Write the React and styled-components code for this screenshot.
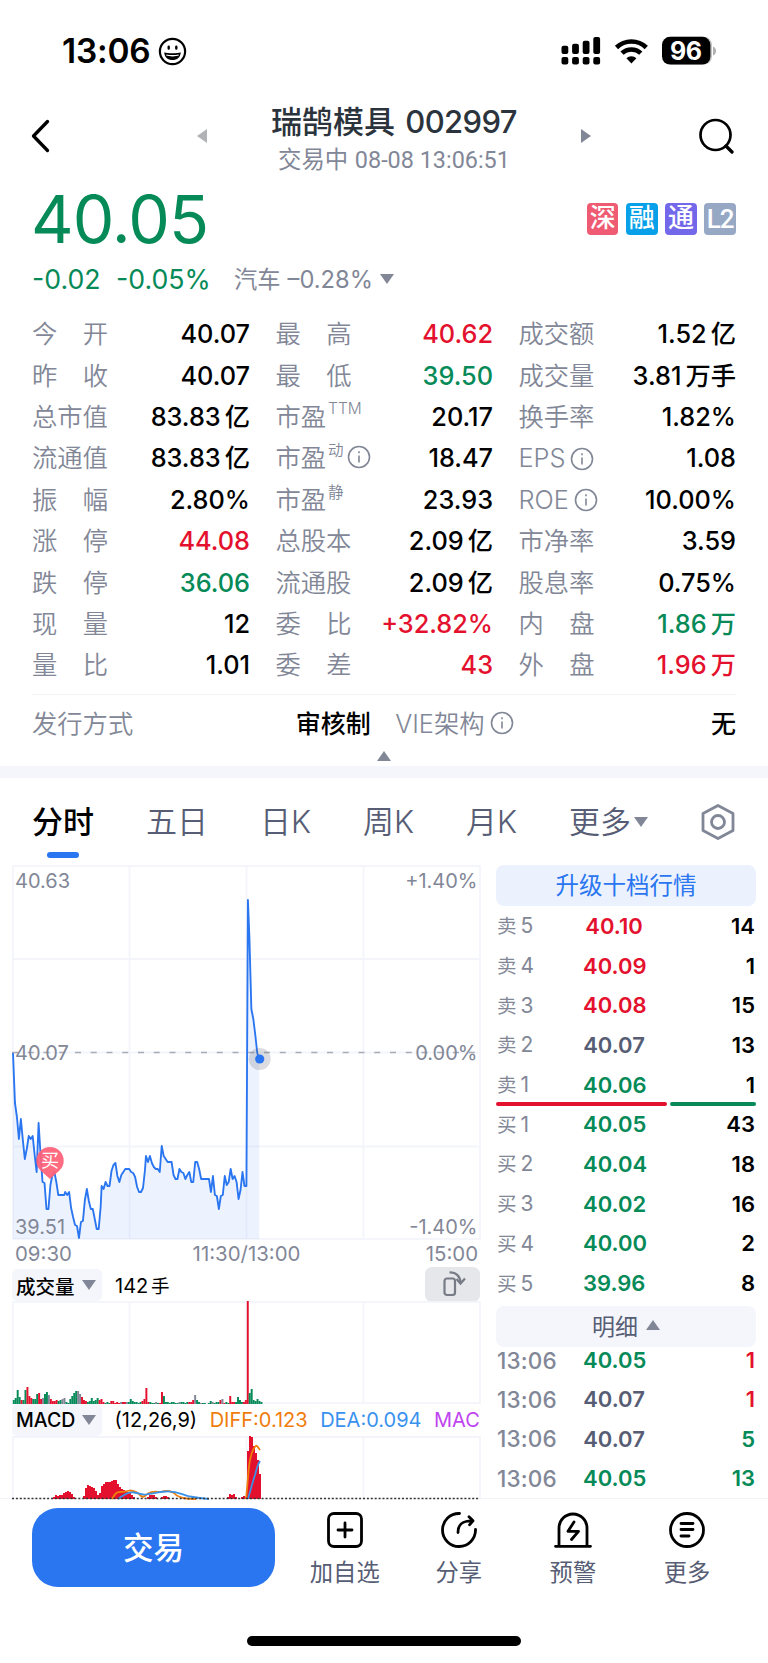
import styled, { createGlobalStyle } from "styled-components";

const RED = "#e4112e";
const GREEN = "#068a58";
const GREY = "#828797";
const SLATE = "#565d74";
const BLUE = "#2a75f0";

const stats = [
	[["今开", "40.07"], ["最高", "40.62", RED], ["成交额", "1.52", null, "亿"]],
	[["昨收", "40.07"], ["最低", "39.50", GREEN], ["成交量", "3.81", null, "万手"]],
	[["总市值", "83.83", null, "亿"], ["市盈", "20.17", null, "", "TTM"], ["换手率", "1.82%"]],
	[["流通值", "83.83", null, "亿"], ["市盈", "18.47", null, "", "动", true], ["EPS", "1.08", null, "", "", true]],
	[["振幅", "2.80%"], ["市盈", "23.93", null, "", "静"], ["ROE", "10.00%", null, "", "", true]],
	[["涨停", "44.08", RED], ["总股本", "2.09", null, "亿"], ["市净率", "3.59"]],
	[["跌停", "36.06", GREEN], ["流通股", "2.09", null, "亿"], ["股息率", "0.75%"]],
	[["现量", "12"], ["委比", "+32.82%", RED], ["内盘", "1.86", GREEN, "万"]],
	[["量比", "1.01"], ["委差", "43", RED], ["外盘", "1.96", RED, "万"]],
];

const asks = [
	["卖", 5, "40.10", RED, 14],
	["卖", 4, "40.09", RED, 1],
	["卖", 3, "40.08", RED, 15],
	["卖", 2, "40.07", SLATE, 13],
	["卖", 1, "40.06", GREEN, 1],
];

const bids = [
	["买", 1, "40.05", GREEN, 43],
	["买", 2, "40.04", GREEN, 18],
	["买", 3, "40.02", GREEN, 16],
	["买", 4, "40.00", GREEN, 2],
	["买", 5, "39.96", GREEN, 8],
];

const ticks = [
	["40.05", GREEN, 1, RED],
	["40.07", SLATE, 1, RED],
	["40.07", SLATE, 5, GREEN],
	["40.05", GREEN, 13, GREEN],
];

const pricePoints =
	"1,188 3,238 5,252 7,274 9,254 11,275 13,294 15,284 17,271 19,274 21,271 23,290 25,307 27,258 29,290 31,317 33,318 35,344 37,344 39,320 41,310 43,307 45,317 47,330 53,330 54,327 56,330 58,327 60,343 62,352 64,360 66,361 68,373 70,357 72,356 74,335 76,324 78,336 80,344 82,344 84,354 86,364 88,364 90,342 91,321 93,324 95,317 97,321 99,321 101,306 103,300 105,298 107,311 109,317 111,310 113,307 115,304 119,304 121,307 123,308 125,312 127,322 129,327 131,327 133,323 135,305 136,291 138,297 140,291 142,298 144,302 146,304 148,304 150,307 152,281 154,291 156,294 158,297 162,297 164,310 166,314 168,314 170,304 172,307 174,308 176,314 178,310 180,307 182,317 184,317 186,297 188,297 190,304 192,314 200,314 202,327 204,311 206,330 208,331 210,344 212,331 214,330 216,311 218,320 220,317 222,304 224,314 226,311 228,317 230,334 232,325 234,307 236,321 238,321 239.5,35 241,72 243,144 245,154 247,170 249,188 251,194";

// colour code and height for every minute of trading
const volumes =
	"g4 g6 g14 g7 r4 g4 g14 r17 r8 r6 g5 g5 g10 r11 r5 x6 g10 g12 x9 r5 r3 r3 r4 g3 g4 x5 x6 g2 g1 g5 g8 g11 g13 x13 x10 r7 r4 r3 g2 g3 g6 g3 g4 g6 r4 r5 r2 g1 g2 g1 r3 r3 r1 r2 r1 x2 r2 r2 x2 g2 g5 g3 g2 g2 g1 g2 r3 r5 r16 r2 g2 g1 g1 x2 g1 r1 r12 g8 g2 g2 g1 g2 g2 g1 g1 x2 g2 g2 g1 g2 r2 r2 r4 x9 g4 g2 x1 g1 g1 g0 g1 g3 x2 g1 g2 g2 r4 x5 r1 g2 g1 r8 r2 r2 g2 g7 g4 g2 r2 r4 r103 g11 g15 g4 g3 g5 g3 g2"
		.split(" ");

const macdBars = [
	[42, 2], [44, 4], [46, 3], [48, 4], [50, 4], [52, 6], [54, 7], [56, 8], [58, 7], [60, 5], [62, 2],
	[72, 3], [74, 11], [76, 14], [78, 13], [80, 12], [82, 11], [84, 8], [86, 4], [88, 6], [90, 13], [92, 15],
	[94, 17], [96, 17], [98, 17], [100, 18], [102, 19], [104, 19], [106, 15], [108, 12], [110, 10], [112, 9],
	[114, 8], [116, 7], [118, 6], [120, 4], [122, 2], [136, 2], [138, 4], [140, 4], [142, 4], [144, 2],
	[150, 2], [152, 3], [154, 3], [156, 2], [216, 2], [218, 5], [220, 4], [222, 5], [224, 2], [230, 2], [232, 3],
	[234, 2], [236, 48], [238, 64], [240, 62], [242, 53], [244, 46], [246, 39], [248, 25],
];

function Info() {
	return (
		<InfoSvg viewBox="0 0 24 24" fill="none" stroke={GREY} strokeWidth="1.6">
			<circle cx="12" cy="12" r="10.5" />
			<path d="M12 10.5v7M12 6.3v2" />
		</InfoSvg>
	);
}

function Stat({ item }) {
	const [label, value, color, unit, sup, info] = item;
	return (
		<StatCell>
			<Label $latin={label === "EPS" || label === "ROE"}>
				{label.length === 2 && !sup ? (
					<Spread>
						<span>{label[0]}</span>
						<span>{label[1]}</span>
					</Spread>
				) : (
					label
				)}
				{sup && <Sup $latin={sup === "TTM"}>{sup}</Sup>}
				{info && <Info />}
			</Label>
			<Value $color={color}>
				{value}
				{unit && <Unit>{unit}</Unit>}
			</Value>
		</StatCell>
	);
}

function StatusIcons() {
	return (
		<svg width="160" height="30" viewBox="560 36 160 30">
			{[0, 1, 2, 3].map((i) => (
				<g key={i}>
					<rect x={561.5 + i * 10.6} y={[45.7, 43.7, 40.7, 37][i]} width="6.8" height={[8.3, 10.3, 13.3, 17][i]} rx="2" />
					<rect x={561.5 + i * 10.6} y="57" width="6.8" height="7.5" rx="2" />
				</g>
			))}
			<g fill="none" stroke="#000" strokeWidth="4.6">
				<path d="M616.500 47.500a21.500 21.500 0 0 1 29.800 0" />
				<path d="M622 53.200a13.700 13.700 0 0 1 18.800 0" />
			</g>
			<path d="M631.400 63.500l-5-5.200a7.400 7.400 0 0 1 10 0z" />
			<rect x="664" y="36.800" width="48" height="27.800" rx="8" fill="#c4c4c4" />
			<rect x="662" y="36.800" width="48.400" height="27.800" rx="8" />
			<path d="M713 46.500c4 1.500 4 7.500 0 9z" fill="#b0b0b0" />
			<text x="685.800" y="59.800" textAnchor="middle" fontFamily="Inter" fontSize="25" fontWeight="700" fill="#fff" letterSpacing="-0.5">
				96
			</text>
		</svg>
	);
}

function PriceChart() {
	return (
		<svg width="470" height="376" viewBox="0 0 470 376">
			<g stroke="#f4f5fb" strokeWidth="1.8" fill="none">
				<rect x="1" y="1" width="467" height="373" />
				<path d="M117.500 0V374M234.500 0V374M351.500 0V374M0 94H468M0 187.500H468M0 281.500H468" />
			</g>
			<polygon points={`1,374 ${pricePoints} 251,374`} transform="scale(0.985 1)" fill={BLUE} fillOpacity="0.085" />
			<path d="M0 187.500H468" stroke="#a9acb8" strokeWidth="1.5" strokeDasharray="6 9.750" />
			<polyline
				points={pricePoints}
				transform="scale(0.985 1)"
				fill="none"
				stroke={BLUE}
				strokeWidth="1.9"
				strokeLinejoin="round"
			/>
			<g fontFamily="Inter" fontSize="20" fill={GREY}>
				<text x="3" y="22.500">40.63</text>
				<text x="3" y="194.500">40.07</text>
				<text x="3" y="368.500">39.51</text>
				<text x="465.500" y="22.500" textAnchor="end">+1.40%</text>
				<text x="465.500" y="194.500" textAnchor="end">0.00%</text>
				<text x="465.500" y="368.500" textAnchor="end">-1.40%</text>
			</g>
			<circle cx="247.700" cy="194" r="11" fill="#5b6270" fillOpacity="0.22" />
			<circle cx="247.700" cy="194" r="4.600" fill={BLUE} />
			<path d="M38 314L28.500 305.500A13.700 13.700 0 1 1 47.500 305.500Z" fill="#ff6076" fillOpacity="0.93" />
			<text x="38" y="302" textAnchor="middle" fontFamily="Noto Sans CJK SC" fontSize="18" fill="#fff">
				买
			</text>
		</svg>
	);
}

function VolumeChart() {
	const fills = { g: GREEN, r: RED, x: GREY };
	return (
		<svg width="470" height="103" viewBox="0 0 470 103">
			<g stroke="#f4f5fb" strokeWidth="1.8" fill="none">
				<rect x="1" y="1" width="467" height="101" />
				<path d="M117.500 0V102M234.500 0V102M351.500 0V102" />
			</g>
			{volumes.map((v, i) => {
				const h = Number(v.slice(1));
				return <rect key={i} x={0.8 + i * 1.95} y={103 - h} width="1.96" height={h} fill={fills[v[0]]} />;
			})}
		</svg>
	);
}

function MacdChart() {
	return (
		<svg width="470" height="64" viewBox="0 0 470 64">
			<g stroke="#f4f5fb" strokeWidth="1.8" fill="none">
				<path d="M1 64V1H468V64M117.500 0V64M234.500 0V64M351.500 0V64" />
			</g>
			{macdBars.map(([x, h]) => (
				<rect key={x} x={x - 1} y={63 - h} width="2" height={h} fill={RED} shapeRendering="crispEdges" />
			))}
			<g fill="none" strokeWidth="1.8">
				<path
					d="M100 63C103 58 104 56 108 56S114 55.500 118 54.500C124 55 126 57 129 60C131 62 133 60 136 57.500C141 54.500 144 56 149 56C153 54.500 158 54.500 162 57C166 62 168 60.500 171 62C176 63 180 63 184 63M234 63C236 46 236 34 238 24C240 14 243 9 245 10L248 14"
					stroke="#ef7d0b"
				/>
				<path
					d="M106 63C112 59 115 56 122 56.500C128 57 130 60 136 58C146 57 148 55.500 154 55.500C166 55 168 58 178 60.500C186 62 190 62.500 197 63M236 63C239 52 242 42 243 39C245 31 246 28 248 25"
					stroke="#3a92e8"
				/>
			</g>
			<path d="M0 62.500H468" stroke="#333" strokeWidth="1.500" strokeDasharray="2 1.900" />
		</svg>
	);
}

function BookLevel({ level }) {
	const [side, n, price, color, lots] = level;
	return (
		<BookRow>
			<Side>
				{side}
				<b>{n}</b>
			</Side>
			<BookPrice $color={color}>{price}</BookPrice>
			<Lots>{lots}</Lots>
		</BookRow>
	);
}

export default function App() {
	return (
		<>
			<GlobalStyle />
			<Screen>
				<StatusBar>
					<Clock>
						13:06
						<svg width="29" height="29" viewBox="0 0 29 29" fill="none" stroke="#000" strokeWidth="2.200">
							<circle cx="14.500" cy="14.500" r="12.600" />
							<path d="M6.300 15.200c2.500 1.300 13.900 1.300 16.400 0c0 5-3.700 7.800-8.200 7.800s-8.200-2.800-8.200-7.800z" fill="#000" stroke="none" />
							<path d="M8.300 18c3 1 9.400 1 12.400 0" stroke="#fff" strokeWidth="1.300" />
							<path d="M10.700 9.800v1.800M18.300 9.800v1.800" strokeLinecap="round" strokeWidth="2.400" />
						</svg>
					</Clock>
					<StatusIcons />
				</StatusBar>

				<Header>
					<svg width="20" height="34" viewBox="0 0 20 34" fill="none" stroke="#000" strokeWidth="3.300">
						<path d="M17.500 2.500L3.500 17L17.500 31.500" strokeLinecap="round" strokeLinejoin="round" />
					</svg>
					<Titles>
						<Arrow $dir="left" />
						<TitleText>
							<Name>
								瑞鹄模具 <b>002997</b>
							</Name>
							<Session>
								交易中 <b>08-08 13:06:51</b>
							</Session>
						</TitleText>
						<Arrow $dir="right" />
					</Titles>
					<svg width="37" height="36" viewBox="0 0 37 36" fill="none" stroke="#000" strokeWidth="2.700">
						<circle cx="17.500" cy="17" r="15" />
						<path d="M28 28l6 6" strokeWidth="3.300" strokeLinecap="round" />
					</svg>
				</Header>

				<PriceRow>
					<Price>40.05</Price>
					<Badges>
						<Badge $color="#ee5b72">深</Badge>
						<Badge $color="#08a0e8">融</Badge>
						<Badge $color="#7468ea">通</Badge>
						<Badge $color="#96a8c4" $latin>
							L2
						</Badge>
					</Badges>
				</PriceRow>
				<ChangeRow>
					<Change $width={84}>-0.02</Change>
					<Change $width={118}>-0.05%</Change>
					<Sector>
						<span>汽车</span>
						<b>–0.28%</b>
						<Triangle />
					</Sector>
				</ChangeRow>

				<Stats>{stats.map((row) => row.map((item) => <Stat key={item[0] + item[1]} item={item} />))}</Stats>

				<Issue>
					<Label>发行方式</Label>
					<Strong $width={237.5}>审核制</Strong>
					<VieLabel>
						VIE架构
						<Info />
					</VieLabel>
					<Strong>无</Strong>
				</Issue>
				<Fold>
					<Triangle $up />
				</Fold>
				<Band />

				<Tabs>
					<Tab $active>
						<span>分时</span>
					</Tab>
					<Tab>
						<span>五日</span>
					</Tab>
					<Tab>
						<span>日K</span>
					</Tab>
					<Tab>
						<span>周K</span>
					</Tab>
					<Tab>
						<span>月K</span>
					</Tab>
					<Tab>
						<span>更多</span>
						<Triangle />
					</Tab>
					<svg width="36" height="38" viewBox="0 0 36 38" fill="none" stroke={GREY} strokeWidth="2.800">
						<path d="M18 2.500L33 10.500V27.500L18 35.500L3 27.500V10.500Z" strokeLinejoin="round" />
						<circle cx="18" cy="19" r="6.500" />
					</svg>
				</Tabs>

				<Main>
					<Charts>
						<PriceChart />
						<Times>
							<span>09:30</span>
							<span>11:30/13:00</span>
							<span>15:00</span>
						</Times>
						<VolumeHead>
							<Picker>
								成交量
								<Triangle />
							</Picker>
							<Legend>
								142 <Hands>手</Hands>
							</Legend>
							<RotateButton>
								<svg width="28" height="28" viewBox="0 0 28 28" fill="none" stroke="#777b85" strokeWidth="2.200">
									<rect x="5.500" y="8.500" width="10.500" height="16.500" rx="2.500" />
									<path d="M10.500 2.500C17 2 21 6 21.500 12.500M17.500 9L21.500 13.500L26 8.500" />
								</svg>
							</RotateButton>
						</VolumeHead>
						<VolumeChart />
						<MacdHead>
							<Picker>
								MACD
								<Triangle />
							</Picker>
							<Legend>(12,26,9)</Legend>
							<Legend $color="#f07c0c">DIFF:0.123</Legend>
							<Legend $color="#3a92ee">DEA:0.094</Legend>
							<Legend $color="#c044f0">MAC</Legend>
						</MacdHead>
						<MacdChart />
					</Charts>

					<Book>
						<Upgrade>升级十档行情</Upgrade>
						{asks.map((level) => (
							<BookLevel key={level[1]} level={level} />
						))}
						<Ratio>
							<RatioPart $grow={170} $color={RED} />
							<RatioPart $grow={86} $color={GREEN} />
						</Ratio>
						{bids.map((level) => (
							<BookLevel key={level[1]} level={level} />
						))}
						<Detail>
							明细
							<Triangle $up />
						</Detail>
						<Ticks>
							{ticks.map(([price, color, lots, lotsColor], i) => (
								<TickRow key={i}>
									<Time>13:06</Time>
									<BookPrice $color={color}>{price}</BookPrice>
									<Lots $color={lotsColor}>{lots}</Lots>
								</TickRow>
							))}
						</Ticks>
					</Book>
				</Main>

				<BottomBar>
					<TradeButton>交易</TradeButton>
					<Action>
						<ActionSvg viewBox="0 0 38 38">
							<rect x="2.500" y="2.500" width="33" height="33" rx="5.500" />
							<path d="M19 12v14M12 19h14" />
						</ActionSvg>
						加自选
					</Action>
					<Action>
						<ActionSvg viewBox="0 0 38 38">
							<path d="M19.500 2.500A16.500 16.500 0 1 0 35.500 18.500" />
							<path d="M18 21.500C18 13 22.500 9.800 31.500 9.800M29 5.800L33 9.800L29.500 13.800" />
						</ActionSvg>
						分享
					</Action>
					<Action>
						<ActionSvg viewBox="0 0 38 38">
							<path d="M5 35V17a14 14 0 0 1 28 0v18M1.500 35.300h35" />
							<path d="M20 11L14 20.300H24.500L17.500 28.500" />
						</ActionSvg>
						预警
					</Action>
					<Action>
						<ActionSvg viewBox="0 0 38 38">
							<circle cx="19" cy="19" r="16.500" />
							<path d="M13 12.500h12M13 18.500h12M13 25h8" />
						</ActionSvg>
						更多
					</Action>
				</BottomBar>
				<HomeBar />
			</Screen>
		</>
	);
}

const GlobalStyle = createGlobalStyle`
	* {
		box-sizing: border-box;
	}

	body {
		margin: 0;
		background-color: white;
	}

	svg {
		display: block;
		flex-shrink: 0;
	}

	b {
		font-weight: inherit;
	}
`;

const Screen = styled.div`
	width: 768px;
	height: 1663px;
	overflow: hidden;
	background-color: white;
	color: black;
	font-family: Inter, "Noto Sans CJK SC", sans-serif;
	white-space: nowrap;
	display: flex;
	flex-direction: column;
`;

const StatusBar = styled.div`
	height: 102px;
	padding: 0 48px 0 62px;
	display: flex;
	justify-content: space-between;
	align-items: center;
`;

const Clock = styled.div`
	font-size: 33.4px;
	font-weight: 600;
	letter-spacing: -0.2px;
	display: flex;
	align-items: center;
	gap: 8px;
`;

const Header = styled.div`
	height: 82px;
	padding: 0 33px 14px 30px;
	display: flex;
	align-items: center;
`;

const Titles = styled.div`
	width: 394px;
	margin: 0 auto 0 147px;
	display: flex;
	justify-content: space-between;
	align-items: center;
`;

const TitleText = styled.div`
	text-align: center;
	margin-top: 9px;
`;

const Arrow = styled.div`
	border: 7px solid transparent;
	border-left: ${(p) => (p.$dir === "right" ? "10px solid " + GREY : "0")};
	border-right: ${(p) => (p.$dir === "left" ? "10px solid #b1b2b5" : "0")};
`;

const Name = styled.div`
	font-size: 31px;
	line-height: 38px;
	font-weight: 500;
	color: #2b343c;

	b {
		margin-left: 2px;
		font-weight: 500;
		letter-spacing: -0.6px;
	}
`;

const Session = styled.div`
	font-size: 23.4px;
	line-height: 37px;
	color: ${GREY};

	b {
		font-family: Roboto, sans-serif;
	}
`;

const PriceRow = styled.div`
	height: 70px;
	padding: 0 32px 0 31px;
	display: flex;
	justify-content: space-between;
	align-items: center;
`;

const Price = styled.div`
	margin-top: -1px;
	font-size: 66px;
	line-height: 70px;
	font-weight: 400;
	letter-spacing: -0.9px;
	color: ${GREEN};
`;

const Badges = styled.div`
	display: flex;
	gap: 7.6px;
`;

const Badge = styled.div`
	width: 31.6px;
	height: 32px;
	padding-bottom: ${(p) => (p.$latin ? 0 : 3)}px;
	border-radius: 4px;
	background-color: ${(p) => p.$color};
	color: white;
	font-family: ${(p) => (p.$latin ? "Roboto" : "inherit")}, "Noto Sans CJK SC", sans-serif;
	font-size: 26px;
	line-height: 30px;
	font-weight: 500;
	letter-spacing: ${(p) => (p.$latin ? "-1px" : 0)};
	display: flex;
	justify-content: center;
	align-items: center;
`;

const ChangeRow = styled.div`
	height: 50px;
	padding-left: 32px;
	display: flex;
	align-items: center;
	color: ${GREEN};
`;

const Change = styled.div`
	width: ${(p) => p.$width}px;
	font-size: 26.7px;
`;

const Sector = styled.div`
	font-size: 23.3px;
	color: ${GREY};
	display: flex;
	align-items: center;

	span {
		margin-bottom: 3px;
	}

	b {
		margin: 0 7px 0 7px;
		font-size: 23.7px;
	}
`;

const Triangle = styled.i`
	width: 0;
	border: 7px solid transparent;
	border-top: ${(p) => (p.$up ? "0" : "10px solid " + GREY)};
	border-bottom: ${(p) => (p.$up ? "10px solid " + GREY : "0")};
`;

const Stats = styled.div`
	height: 382px;
	padding: 9px 32px 0;
	display: grid;
	grid-template-columns: 218px 217.5px 217.5px;
	column-gap: 25.5px;
	grid-auto-rows: 41.4px;
`;

const StatCell = styled.div`
	display: flex;
	justify-content: space-between;
	align-items: center;
`;

const Label = styled.div`
	padding-bottom: ${(p) => (p.$latin ? 0 : 3)}px;
	font-size: 25.3px;
	color: ${GREY};
	font-weight: 350;
	display: flex;
	align-items: center;
`;

const Spread = styled.div`
	width: 76px;
	display: flex;
	justify-content: space-between;
`;

const InfoSvg = styled.svg`
	width: 24px;
	height: 24px;
	margin-left: 5px;
	position: relative;
	top: 1px;
`;

const Sup = styled.span`
	font-size: 15.5px;
	margin: ${(p) => (p.$latin ? -12 : -14)}px 0 0 2px;

	& + ${InfoSvg} {
		margin-left: 3px;
	}
`;

const Value = styled.div`
	font-size: 25.3px;
	font-weight: 500;
	color: ${(p) => p.$color || "black"};
	display: flex;
	align-items: center;
`;

const Unit = styled.span`
	margin: -3px 0 0 4px;
`;

const Issue = styled.div`
	height: 57px;
	margin: 8px 32px 0;
	border-top: 1px solid #f2f3f7;
	display: flex;
	align-items: center;
`;

const Strong = styled.div`
	width: ${(p) => (p.$width ? p.$width + "px" : "auto")};
	flex: ${(p) => (p.$width ? "none" : 1)};
	padding-bottom: 3px;
	font-size: 25px;
	font-weight: 500;
	text-align: right;
`;

const VieLabel = styled(Label)`
	margin-left: 24.5px;
`;

const Fold = styled.div`
	height: 15px;
	display: flex;
	justify-content: center;
	align-items: flex-start;
`;

const Band = styled.div`
	height: 12px;
	background-color: #f4f6fb;
`;

const Tabs = styled.div`
	height: 87px;
	padding: 0 32px;
	display: flex;
	justify-content: space-between;
	align-items: center;
`;

const Tab = styled.div`
	position: relative;
	font-size: 31px;
	font-weight: ${(p) => (p.$active ? 500 : 350)};
	color: ${(p) => (p.$active ? "black" : SLATE)};
	display: flex;
	align-items: center;
	gap: 3px;

	span {
		padding-bottom: 4px;
	}

	&::after {
		content: "";
		display: ${(p) => (p.$active ? "block" : "none")};
		position: absolute;
		left: 15px;
		bottom: -12px;
		width: 32px;
		height: 6px;
		border-radius: 3px;
		background-color: ${BLUE};
	}
`;

const Main = styled.div`
	height: 634px;
	padding: 0 12px;
	display: flex;
	justify-content: space-between;
	border-bottom: 1px solid #f2f3f7;
`;

const Charts = styled.div`
	width: 470px;
`;

const Times = styled.div`
	height: 24px;
	padding: 0 4px 3px 3px;
	display: grid;
	grid-template-columns: 1fr auto 1fr;
	align-items: center;
	font-size: 20.4px;
	color: ${GREY};

	span:last-child {
		text-align: right;
	}
`;

const VolumeHead = styled.div`
	height: 36px;
	padding: 4px 2px 0 0;
	display: flex;
	gap: 13px;
	align-items: center;
`;

const MacdHead = styled(VolumeHead)`
	height: 32px;
	padding: 0;
	gap: 12.5px;
`;

const Picker = styled.div`
	width: 90px;
	height: 32px;
	padding: 0 6px 0 4px;
	flex-shrink: 0;
	border-radius: 5px;
	background-color: #f4f6fb;
	font-size: 19.5px;
	font-weight: 500;
	display: flex;
	justify-content: space-between;
	align-items: center;
`;

const Legend = styled.div`
	font-size: 20px;
	color: ${(p) => p.$color || "black"};
`;

const Hands = styled.span`
	margin-left: -3px;
	font-size: 18.5px;
`;

const RotateButton = styled.div`
	width: 55px;
	height: 35px;
	margin: -2px 0 0 auto;
	border-radius: 7px;
	background-color: #e5e7ea;
	display: flex;
	justify-content: center;
	align-items: center;
`;

const Book = styled.div`
	width: 260px;
`;

const Upgrade = styled.div`
	height: 41px;
	padding-bottom: 3px;
	border-radius: 8px;
	background-color: #ebf2fe;
	color: ${BLUE};
	font-size: 23.5px;
	display: flex;
	justify-content: center;
	align-items: center;
`;

const BookRow = styled.div`
	height: 39.7px;
	padding: 0 1px;
	display: grid;
	grid-template-columns: 86px 62px 1fr;
	align-items: center;
`;

const Ticks = styled.div`
	margin-top: -6.5px;
`;

const TickRow = styled(BookRow)`
	height: 39.4px;
`;

const Side = styled.div`
	padding-bottom: 2px;
	font-size: 19.5px;
	color: ${GREY};
	display: flex;
	align-items: center;
	gap: 4px;

	b {
		margin-top: 2px;
		font-size: 21px;
	}
`;

const Time = styled.div`
	font-size: 22.5px;
	font-weight: 500;
	letter-spacing: 0.2px;
	color: ${GREY};
`;

const BookPrice = styled.div`
	font-size: 22px;
	font-weight: 600;
	text-align: center;
	color: ${(p) => p.$color};
`;

const Lots = styled.div`
	font-size: 22px;
	font-weight: 600;
	color: ${(p) => p.$color || "black"};
	text-align: right;
`;

const Ratio = styled.div`
	height: 4px;
	margin: -2.5px 0 -1.5px;
	display: flex;
	gap: 3px;
`;

const RatioPart = styled.div`
	flex: ${(p) => p.$grow};
	border-radius: 2px;
	background-color: ${(p) => p.$color};
`;

const Detail = styled.div`
	height: 41px;
	margin-top: 3px;
	padding-bottom: 3px;
	border-radius: 8px;
	background-color: #f4f6fb;
	color: ${SLATE};
	font-size: 23px;
	display: flex;
	justify-content: center;
	align-items: center;
	gap: 8px;
`;

const BottomBar = styled.div`
	height: 89px;
	padding: 9px 24px 0 32px;
	display: flex;
`;

const TradeButton = styled.div`
	width: 243.5px;
	height: 79px;
	margin-right: 12.5px;
	padding-bottom: 3px;
	border-radius: 26px;
	background-color: ${BLUE};
	color: white;
	font-size: 30.5px;
	font-weight: 500;
	display: flex;
	justify-content: center;
	align-items: center;
`;

const Action = styled.div`
	width: 114.2px;
	padding-top: 3px;
	display: flex;
	flex-direction: column;
	align-items: center;
	font-size: 23.3px;
	line-height: 47px;
	color: ${SLATE};
`;

const ActionSvg = styled.svg`
	width: 38px;
	height: 38px;
	fill: none;
	stroke: black;
	stroke-width: 2.8;
	stroke-linecap: round;
	stroke-linejoin: round;
`;

const HomeBar = styled.div`
	width: 274px;
	height: 10px;
	margin: 48px auto 0;
	border-radius: 5px;
	background-color: black;
`;
